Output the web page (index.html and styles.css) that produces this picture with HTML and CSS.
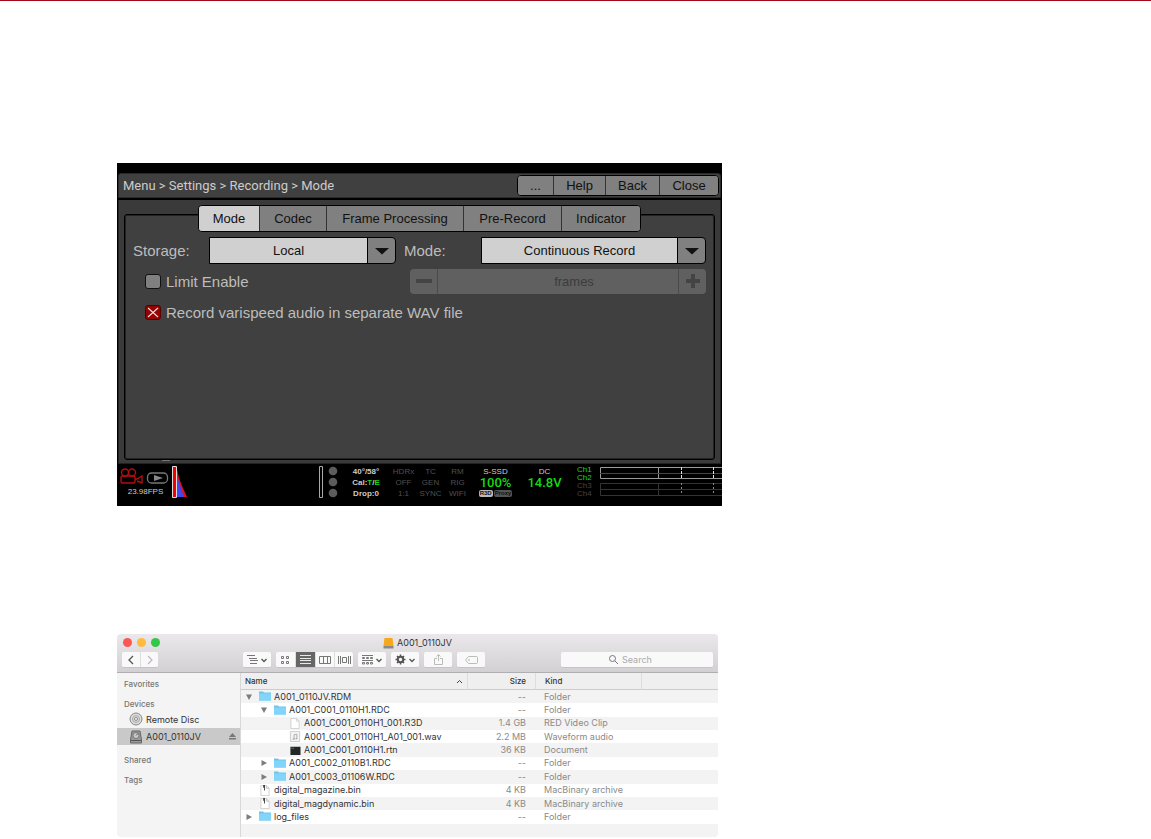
FILE: index.html
```
<!DOCTYPE html>
<html lang="en">
<head>
  <meta charset="UTF-8">
  <title>Recording Mode</title>
  <link rel="stylesheet" href="styles.css">
</head>
<body>
  <svg width="0" height="0" class="defs">
    <symbol id="folder" viewBox="0 0 12 10"><path d="M0 0h4l1 1h7v8H0z" fill="#6cc5ee"/><path d="M0 2h12v7H0z" fill="#82d5f8"/></symbol>
    <symbol id="file" viewBox="0 0 12 12"><path d="M1.500.5h6l3 3v8h-9z" fill="#fff" stroke="#d0d0d0"/><path d="M7.500.5v3h3" fill="none" stroke="#d0d0d0"/></symbol>
    <symbol id="bin" viewBox="0 0 12 12"><path d="M1.500.5h6l3 3v8h-9z" fill="#fff" stroke="#d0d0d0"/><path d="M7.500.5v3h3" fill="none" stroke="#bbb"/><path d="M4 0h2v6H5V3H4z" fill="#444"/></symbol>
    <symbol id="wav" viewBox="0 0 12 12"><path d="M1 .5h10v11H1z" fill="#f4f4f4" stroke="#ccc"/><path d="M5 8.500V4l3-.5V8" fill="none" stroke="#aaa"/><path d="M3.500 8h2v1.500h-2zM6.500 7.500h2V9h-2z" fill="#aaa"/></symbol>
    <symbol id="term" viewBox="0 0 12 12"><path d="M1 2h11v9H1z" fill="#222725"/><path d="M2 3h3v1H2z" fill="#5a7762"/></symbol>
    <symbol id="open" viewBox="0 0 8 8"><path d="M1 1.500h6L4 7z" fill="#7d7d7d"/></symbol>
    <symbol id="closed" viewBox="0 0 8 8"><path d="M1.500 1v6L7 4z" fill="#7d7d7d"/></symbol>
    <symbol id="chev" viewBox="0 0 8 8"><path d="M1.500 3 4 5.500 6.500 3" fill="none" stroke="#555" stroke-width="1.300"/></symbol>
    <symbol id="down" viewBox="0 0 16 8"><path d="M1 1h14L8 7.500z" fill="#111"/></symbol>
  </svg>

  <main>
    <section class="camera">
      <header class="cam-header">
        <span class="crumbs">Menu &gt; Settings &gt; Recording &gt; Mode</span>
        <div class="cam-buttons">
          <button class="b-more">...</button>
          <button class="b-help">Help</button>
          <button class="b-back">Back</button>
          <button class="b-close">Close</button>
        </div>
      </header>

      <div class="cam-body">
        <nav class="tabs">
          <button class="t-mode active">Mode</button>
          <button class="t-codec">Codec</button>
          <button class="t-frame">Frame Processing</button>
          <button class="t-pre">Pre-Record</button>
          <button class="t-ind">Indicator</button>
        </nav>
        <div class="box">
          <div class="row selects">
            <label for="storage">Storage:</label>
            <div class="select">
              <select id="storage"><option>Local</option></select>
              <svg width="16" height="8"><use href="#down"/></svg>
            </div>
            <label for="mode" class="mode-label">Mode:</label>
            <div class="select">
              <select id="mode"><option>Continuous Record</option></select>
              <svg width="16" height="8"><use href="#down"/></svg>
            </div>
          </div>
          <div class="row limit">
            <label class="check"><input type="checkbox">Limit Enable</label>
            <div class="stepper">
              <button disabled aria-label="Less"><svg width="16" height="16"><path d="M0 6h16v4H0z" fill="#444"/></svg></button>
              <input type="text" value="frames" aria-label="Frames" disabled>
              <button disabled aria-label="More"><svg width="16" height="16"><path d="M1 6h5V1h4v5h5v4h-5v5H6v-5H1z" fill="#444"/></svg></button>
            </div>
          </div>
          <div class="row">
            <label class="check"><input type="checkbox" checked>Record varispeed audio in separate WAV file</label>
          </div>
        </div>
        <div class="handle"></div>
      </div>

      <footer class="status">
        <div class="fps">
          <svg width="51" height="18" viewBox="0 0 51 18" fill="none">
            <g stroke="#b40d0d" stroke-width="1.400"><circle cx="6" cy="4.500" r="3.500"/><circle cx="13" cy="4.500" r="3.500"/><rect x="2" y="8" width="14" height="7" rx="1.500"/><path d="M16 11l2 0 5-3v7l-5-2"/></g>
            <rect x="28.500" y="5" width="20" height="10" rx="4" stroke="#777" stroke-width="1.300"/><path d="M35 7l9 3-9 3z" fill="#888"/>
          </svg>
          <span>23.98FPS</span>
        </div>
        <svg class="histogram" width="151" height="32" viewBox="0 0 151 32">
          <path d="M4 3h1l2 9 3 8 5 11H4z" fill="#e01020"/>
          <path d="M4 1l2 12 3 9 3 9H4z" fill="#4545ee"/>
          <path d="M4.500 1v30" stroke="#9aa8b8"/>
          <path d="M.5 .5h4v31h-4z" fill="#f00000" stroke="#ddd"/>
          <path d="M147.500 .5h3v31h-3z" fill="none" stroke="#aaa"/>
        </svg>
        <svg class="dots" width="10" height="32" fill="#5c5c5c"><circle cx="5" cy="5" r="4.300"/><circle cx="5" cy="16" r="4.300"/><circle cx="5" cy="27" r="4.300"/></svg>
        <div class="info">
          <span>40°/58°</span>
          <span>Cal:<b>T</b>/<b>E</b></span>
          <span>Drop:0</span>
        </div>
        <div class="flags">
          <span>HDRx</span><span>TC</span><span>RM</span>
          <span>OFF</span><span>GEN</span><span>RIG</span>
          <span>1:1</span><span>SYNC</span><span>WIFI</span>
        </div>
        <div class="media">
          <span>S-SSD</span>
          <strong>100%</strong>
          <div class="badges"><i class="on">R3D</i><i>Proxy</i></div>
        </div>
        <div class="power">
          <span>DC</span>
          <strong>14.8V</strong>
        </div>
        <div class="channels">
          <span class="on">Ch1</span><span class="on">Ch2</span><span>Ch3</span><span>Ch4</span>
        </div>
        <svg class="meters" width="122" height="32" fill="none">
          <path d="M123 1.500H.5v11H123M58.500 1v12" stroke="#9a9a9a"/><path d="M0 7.500h123" stroke="#444"/>
          <path d="M81.500 1v12M113.500 1v12" stroke="#ddd" stroke-dasharray="3 1"/>
          <path d="M123 17.500H.5v12H123M58.500 17v12M0 23.500h123" stroke="#333"/>
          <path d="M81.500 17v12M113.500 17v12" stroke="#888" stroke-dasharray="2 2"/>
        </svg>
      </footer>
    </section>

    <section class="finder">
      <header class="titlebar">
        <div class="title-row">
          <div class="lights"><button class="red" aria-label="Close"></button><button class="yellow" aria-label="Minimize"></button><button class="green" aria-label="Zoom"></button></div>
          <h1>
            <svg width="11" height="12" viewBox="0 0 11 12"><path d="M1.500 1h8l1 8H.5z" fill="#f5a81c"/><path d="M.5 9h10v2.500H.5z" fill="#8a8a8a"/></svg>
            A001_0110JV
          </h1>
        </div>
        <div class="toolbar">
          <div class="group nav-group">
            <button aria-label="Back"><svg width="8" height="10"><path d="M6 1 2 5l4 4" fill="none" stroke="#555" stroke-width="1.300"/></svg></button>
            <button aria-label="Forward"><svg width="8" height="10"><path d="M2 1l4 4-4 4" fill="none" stroke="#bbb" stroke-width="1.200"/></svg></button>
          </div>
          <div class="group"><button class="wide" aria-label="Path">
            <svg width="11" height="9" stroke="#777"><path d="M0 .5h8M2 3.500h8M3 5.500h8M3 8.500h7"/></svg><svg width="8" height="8"><use href="#chev"/></svg>
          </button></div>
          <div class="group views">
            <button aria-label="Icons"><svg width="9" height="8" fill="none" stroke="#777"><path d="M.5 .5h2v2h-2zM5.500.5h2v2h-2zM.5 5.500h2v2h-2zM5.500 5.500h2v2h-2z"/></svg></button>
            <button class="active" aria-label="List"><svg width="11" height="9" stroke="#e8e8e8"><path d="M0 .5h11M0 3.500h11M0 5.500h11M0 8.500h11"/></svg></button>
            <button aria-label="Columns"><svg width="12" height="8" fill="none" stroke="#777"><path d="M.5.5h11v7H.5zM4.500.5v7M8.500.5v7"/></svg></button>
            <button aria-label="Gallery"><svg width="13" height="8" fill="none" stroke="#777"><path d="M.5 0v8M2.500 0v8M4.500 1.500h4v5h-4zM10.500 0v8M12.500 0v8"/></svg></button>
          </div>
          <div class="group"><button class="wide" aria-label="Arrange">
            <svg width="11" height="10" fill="none" stroke="#777"><path d="M0 .5h11M0 5.500h11"/><path d="M.5 2.500h2v1h-2zM4.500 2.500h2v1h-2zM8.500 2.500h2v1h-2zM.5 7.500h2v1.500h-2zM4.500 7.500h2v1.500h-2zM8.500 7.500h2v1.500h-2z"/></svg><svg width="8" height="8"><use href="#chev"/></svg>
          </button></div>
          <div class="group"><button class="wide" aria-label="Action">
            <svg width="11" height="11" viewBox="0 0 11 11"><circle cx="5.500" cy="5.500" r="2.700" fill="none" stroke="#555" stroke-width="2"/><path d="M5.500.5v2M5.500 8.500v2M.5 5.500h2M8.500 5.500h2M2 2l1.400 1.400M7.600 7.600 9 9M2 9l1.400-1.400M7.600 3.400 9 2" stroke="#555" stroke-width="1.500"/></svg><svg width="8" height="8"><use href="#chev"/></svg>
          </button></div>
          <div class="group"><button class="wide" aria-label="Share">
            <svg width="9" height="11" fill="none" stroke="#bbb"><path d="M3 4.500H.5v6h8v-6H6M4.500 7V1M2.500 2.500l2-2 2 2"/></svg>
          </button></div>
          <div class="group"><button class="wide" aria-label="Tags">
            <svg width="13" height="8" fill="none" stroke="#bbb"><path d="M3.500.5h8q1 0 1 1v5q0 1-1 1h-8L.5 4z"/><circle cx="4" cy="4" r=".5"/></svg>
          </button></div>
          <label class="search">
            <svg width="9" height="9" fill="none" stroke="#777"><circle cx="3.500" cy="3.500" r="3"/><path d="M6 6l3 3"/></svg>
            <input type="text" placeholder="Search" aria-label="Search">
          </label>
        </div>
      </header>

      <div class="finder-body">
        <aside class="sidebar">
          <h2>Favorites</h2>
          <h2>Devices</h2>
          <a href="#" class="device">
            <svg width="14" height="14" fill="none"><circle cx="7" cy="7" r="6" fill="#ddd" stroke="#888"/><circle cx="7" cy="7" r="3.500" stroke="#aaa"/><circle cx="7" cy="7" r="1.500" fill="#fff" stroke="#888"/></svg>
            Remote Disc
          </a>
          <a href="#" class="device selected">
            <svg width="14" height="14" fill="none"><path d="M3 1h8l1.500 9v3h-11v-3z" fill="#999" stroke="#666"/><circle cx="7" cy="5.500" r="3" fill="#ccc" stroke="#777"/><path d="M2 10.500h10" stroke="#555"/><path d="M7 5.500l2-2" stroke="#555"/></svg>
            A001_0110JV
            <svg class="eject" width="7" height="7"><path d="M3.500 0 7 4H0zM0 5h7v1.500H0z" fill="#777"/></svg>
          </a>
          <h2>Shared</h2>
          <h2>Tags</h2>
        </aside>

        <div class="list">
          <table class="files">
            <thead>
              <tr>
                <th class="c-name"><div class="sort">Name <svg width="7" height="5"><path d="M1 4l2.500-2.500L6 4" fill="none" stroke="#444"/></svg></div></th>
                <th class="c-size">Size</th>
                <th class="c-kind">Kind</th>
                <th></th>
              </tr>
            </thead>
            <tbody>
              <tr><td><div class="name"><svg class="arrow"><use href="#open"/></svg><svg class="icon"><use href="#folder"/></svg>A001_0110JV.RDM</div></td><td>--</td><td>Folder</td><td></td></tr>
              <tr><td><div class="name l1"><svg class="arrow"><use href="#open"/></svg><svg class="icon"><use href="#folder"/></svg>A001_C001_0110H1.RDC</div></td><td>--</td><td>Folder</td><td></td></tr>
              <tr><td><div class="name l2"><svg class="arrow"></svg><svg class="icon"><use href="#file"/></svg>A001_C001_0110H1_001.R3D</div></td><td>1.4 GB</td><td>RED Video Clip</td><td></td></tr>
              <tr><td><div class="name l2"><svg class="arrow"></svg><svg class="icon"><use href="#wav"/></svg>A001_C001_0110H1_A01_001.wav</div></td><td>2.2 MB</td><td>Waveform audio</td><td></td></tr>
              <tr><td><div class="name l2"><svg class="arrow"></svg><svg class="icon"><use href="#term"/></svg>A001_C001_0110H1.rtn</div></td><td>36 KB</td><td>Document</td><td></td></tr>
              <tr><td><div class="name l1"><svg class="arrow"><use href="#closed"/></svg><svg class="icon"><use href="#folder"/></svg>A001_C002_0110B1.RDC</div></td><td>--</td><td>Folder</td><td></td></tr>
              <tr><td><div class="name l1"><svg class="arrow"><use href="#closed"/></svg><svg class="icon"><use href="#folder"/></svg>A001_C003_01106W.RDC</div></td><td>--</td><td>Folder</td><td></td></tr>
              <tr><td><div class="name"><svg class="arrow"></svg><svg class="icon"><use href="#bin"/></svg>digital_magazine.bin</div></td><td>4 KB</td><td>MacBinary archive</td><td></td></tr>
              <tr><td><div class="name"><svg class="arrow"></svg><svg class="icon"><use href="#bin"/></svg>digital_magdynamic.bin</div></td><td>4 KB</td><td>MacBinary archive</td><td></td></tr>
              <tr><td><div class="name"><svg class="arrow"><use href="#closed"/></svg><svg class="icon"><use href="#folder"/></svg>log_files</div></td><td>--</td><td>Folder</td><td></td></tr>
              <tr><td><div class="name">&nbsp;</div></td><td></td><td></td><td></td></tr>
            </tbody>
          </table>
        </div>
      </div>
    </section>
  </main>
</body>
</html>
```

FILE: styles.css
```
* { box-sizing: border-box; }
body { margin: 0; background: #fff; border-top: 1px solid #a3081a; font-family: "Liberation Sans", Arial, sans-serif; }
main { padding: 162px 117px 0; }
button, input, select { font: inherit; color: inherit; margin: 0; padding: 0; border: 0; border-radius: 0; }
svg { display: block; flex: none; }
.defs { position: absolute; }

/* camera menu */
.camera { max-width: 605px; background: #000; padding-top: 10px; }
.cam-header { display: flex; align-items: center; justify-content: space-between; height: 25px; margin: 0 1px; padding: 0 1px 0 4px; background: #404040; border: 1px solid #2a2a2a; border-radius: 3px 3px 0 0; }
.crumbs { font-family: Roboto, sans-serif; font-size: 13px; color: #ccc; }
.cam-buttons, .tabs { display: flex; background: #808080; border: 1px solid #000; border-radius: 4px; overflow: hidden; font-size: 13px; color: #111; }
.cam-buttons button, .tabs button { background: #808080; }
.cam-buttons button { height: 19px; }
.cam-buttons button + button, .tabs button + button { border-left: 1px solid #333; }
.b-more { width: 35px; }
.b-help { width: 52px; }
.b-back { width: 54px; }
.b-close { width: 59px; }

.cam-body { margin: 2px 1px 0; padding: 5px 5px 1px; background: #3a3a3a; border: 1px solid #222; border-top: 0; }
.tabs { position: relative; width: fit-content; margin: 0 auto; }
.tabs button { height: 25px; }
.tabs .active { background: #d0d0d0; }
.t-mode { width: 60px; }
.t-codec { width: 67px; }
.t-frame { width: 137px; }
.t-pre { width: 98px; }
.t-ind { width: 79px; }
.box { min-height: 246px; margin-top: -18px; padding: 22px 8px 0; background: #404040; border: 1px solid #000; border-radius: 3px; box-shadow: inset 0 0 0 1px #222; }
.row { display: flex; align-items: center; height: 26px; margin-bottom: 5px; font-size: 15px; color: #bdbdbd; }
.selects { display: grid; grid-template-columns: 76px 187fr 85px 225fr; }
.mode-label { padding-left: 8px; }
.select { display: grid; align-items: center; }
.select select, .select svg { grid-area: 1 / 1; }
.select svg { justify-self: end; margin-right: 6px; pointer-events: none; }
.select select { appearance: none; width: 100%; height: 27px; padding-right: 28px; border: 1px solid #000; border-radius: 0 4px 4px 0; background: linear-gradient(to left, #808080 27px, #000 27px, #000 28px, #d0d0d0 28px); font-size: 13px; color: #111; text-align: center; text-align-last: center; }
.check { display: flex; align-items: center; gap: 5px; padding-left: 12px; }
.check input { appearance: none; width: 16px; height: 15px; background: #808080; border: 1px solid #111; border-radius: 3px; }
.check input:checked { border-color: #500; background: #900 url("data:image/svg+xml,%3Csvg xmlns='http://www.w3.org/2000/svg' viewBox='0 0 14 13'%3E%3Cpath d='M2 2l10 9M12 2L2 11' stroke='%23ddd' stroke-width='1.200'/%3E%3C/svg%3E") center / 14px 13px no-repeat; }
.limit { justify-content: space-between; }
.stepper { display: flex; width: 296px; height: 25px; background: #606060; border-radius: 4px; overflow: hidden; font-size: 13px; color: #3c3c3c; }
.stepper button { display: flex; align-items: center; justify-content: center; width: 27px; background: none; }
.stepper input { flex: 1; min-width: 0; padding-left: 32px; background: none; border: 1px solid #4a4a4a; border-width: 0 1px; text-align: center; }
.handle { width: 8px; height: 1px; margin: 0 0 1px 38px; background: #777; }

.status { display: flex; height: 42px; padding: 2px 0 0 2px; font-size: 8px; line-height: 11px; color: #ccc; white-space: nowrap; }
.fps { width: 53px; text-align: center; }
.fps svg { margin-top: 2px; }
.dots { margin-left: 5px; }
.info { width: 48px; margin-left: 4px; text-align: center; font-weight: bold; }
.info span { display: block; }
.info b, strong { color: #16d916; }
.flags { display: grid; grid-template-columns: repeat(3, 27px); height: 33px; text-align: center; color: #505050; }
.media, .power { display: flex; flex-direction: column; align-items: center; width: 49px; }
strong { font: 500 13px/11px Roboto, sans-serif; }
.badges { display: flex; gap: 1px; margin-top: 2px; font-size: 6px; font-weight: bold; line-height: 7px; color: #111; }
.badges i { font-style: normal; padding: 0 1px; background: #555; border-radius: 2px; }
.badges .on { background: #bbb; }
.channels { display: flex; flex-direction: column; width: 23px; margin-left: 8px; line-height: 8px; color: #444; }
.channels .on { color: #16d916; }
.meters { flex: 1; min-width: 0; }

/* finder window */
.finder { max-width: 601px; margin-top: 128px; border-radius: 4px; overflow: hidden; font-family: Inter, sans-serif; font-size: 9px; color: #333; }
.titlebar { height: 39px; background: linear-gradient(#eae8ea, #d2d0d2); border-bottom: 1px solid #b0aeb0; }
.title-row { display: grid; grid-template-columns: 1fr auto 1fr; align-items: center; height: 17px; padding: 0 6px; }
.lights { display: flex; gap: 5px; }
.lights button { width: 9px; height: 9px; border-radius: 50%; }
.red { background: #fc5753; }
.yellow { background: #fdbc40; }
.green { background: #33c748; }
h1 { display: flex; align-items: center; gap: 3px; margin: 0; font-size: 9px; font-weight: normal; }
.toolbar { display: flex; gap: 5px; padding: 1px 5px 0; }
.group { display: flex; height: 16px; border-radius: 2px; background: #f9f9f9; border-bottom: 1px solid #c4c4c4; overflow: hidden; }
.group button { display: flex; align-items: center; justify-content: center; width: 19px; background: none; }
.group button + button { border-left: 1px solid #ddd; }
.group .wide { width: 28px; gap: 2px; }
.group .active { width: 20px; background: #666; }
.nav-group { margin-right: 80px; }
.nav-group button { width: 18px; }
.search { display: flex; align-items: center; gap: 4px; width: 152px; height: 16px; margin-left: auto; padding-left: 48px; border-radius: 2px; background: #f9f9f9; border-bottom: 1px solid #c4c4c4; }
.search input { flex: 1; min-width: 0; background: none; outline: 0; }
.search input::placeholder { color: #aaa; opacity: 1; }

.finder-body { display: flex; }
.sidebar { width: 124px; padding-top: 3px; background: #f4f4f4; border-right: 1px solid #d8d8d8; }
.sidebar h2 { margin: 0 0 4px; padding-left: 7px; font-size: 8px; line-height: 16px; font-weight: 500; color: #777; }
.sidebar h2 + .device { margin-top: -6px; }
.device { display: flex; align-items: center; gap: 3px; height: 18px; padding: 0 4px 0 12px; color: #333; text-decoration: none; }
.selected { height: 17px; margin-bottom: 7px; background: #c9c9c9; }
.eject { margin-left: auto; }

.list { flex: 1; min-width: 0; }
.files { width: 100%; height: 164px; border-collapse: separate; border-spacing: 0; table-layout: fixed; line-height: 12px; }
.files th { height: 17px; padding: 0 9px; background: #efefef; border-bottom: 1px solid #ccc; font-size: 8px; font-weight: 500; text-align: left; }
.files th + th { border-left: 1px solid #ddd; }
.files .c-name { width: 226px; padding: 0 4px; }
.files .c-size { width: 68px; text-align: right; }
.files .c-kind { width: 106px; }
.sort { display: flex; align-items: center; justify-content: space-between; }
.files td { padding: 0 9px; color: #8a8a8a; white-space: nowrap; }
.files td:first-child { padding: 0 4px; color: #333; }
.files td:nth-child(2) { text-align: right; }
.files tbody tr:nth-child(odd) { background: #f3f3f3; }
.name { display: flex; align-items: center; }
.arrow { width: 8px; height: 8px; margin-right: 6px; }
.icon { width: 12px; height: 11px; margin-right: 3px; }
.l1 { padding-left: 15px; }
.l2 { padding-left: 30px; }
```
